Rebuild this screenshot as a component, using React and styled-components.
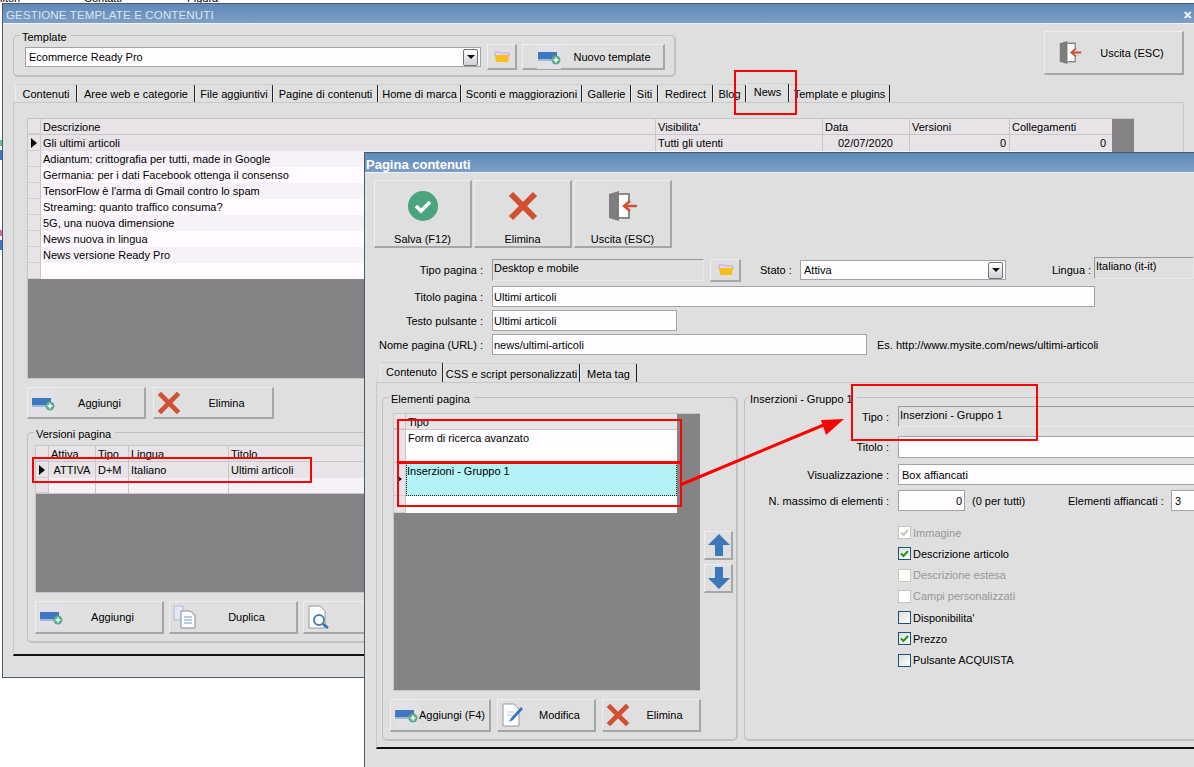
import React from 'react';
import styled, { createGlobalStyle } from 'styled-components';

const GlobalStyle = createGlobalStyle`
  html, body {
    margin: 0;
    padding: 0;
    width: 1194px;
    height: 767px;
    overflow: hidden;
    background: #fff;
    font-family: "Liberation Sans", Arial, sans-serif;
    font-size: 11px;
    color: #000;
  }
  * { box-sizing: border-box; }
`;

const Desktop = styled.div`
  position: relative;
  width: 1194px;
  height: 767px;
  overflow: hidden;
  background: #fff;
`;

const DesktopLabels = styled.div`
  display: flex;
  margin-top: -8px;
  height: 12px;
  line-height: 12px;
  span:nth-child(1) { width: 84px; }
  span:nth-child(2) { width: 103px; }
`;

const Speck = styled.div`
  position: absolute;
  left: 0;
  top: ${(p) => p.$top}px;
  width: 2px;
  height: ${(p) => p.$h}px;
  background: ${(p) => p.$c};
`;

const Window = styled.div`
  position: absolute;
  left: ${(p) => p.$left}px;
  top: ${(p) => p.$top}px;
  width: ${(p) => p.$width}px;
  height: ${(p) => p.$height}px;
  background: #dfdfdf;
  border: 1px solid #4d5a6c;
  border-right: none;
  overflow: hidden;
`;

const TitleBar = styled.div`
  height: 20px;
  display: flex;
  align-items: center;
  justify-content: space-between;
  padding: 3px 2px 0 ${(p) => p.$left}px;
  background: linear-gradient(#5f8ab8, #7c9fc6);
  border-bottom: 1px solid #eef2f6;
  color: ${(p) => p.$color};
  font-size: ${(p) => p.$size}px;
  font-weight: ${(p) => p.$weight};
  letter-spacing: ${(p) => p.$spacing}px;
  white-space: nowrap;
`;

const CloseMark = styled.span`
  color: #fff;
  font-size: 11px;
  font-weight: bold;
`;

const TopRow = styled.div`
  display: flex;
  align-items: flex-start;
  padding: 7px 9px 0 10px;
`;

const Group = styled.fieldset`
  margin: ${(p) => p.$margin || 0};
  padding: ${(p) => p.$padding || 0};
  width: ${(p) => p.$width}px;
  height: ${(p) => p.$height}px;
  border: 2px solid #c0c0c0;
  border-width: 1px 2px 2px 1px;
  border-radius: 5px;
  min-inline-size: 0;
  flex: none;
  position: relative;
`;

const GroupTitle = styled.div`
  position: absolute;
  left: ${(p) => p.$left ?? 6}px;
  top: -5px;
  padding: 0 4px 0 2px;
  height: 13px;
  line-height: 13px;
  background: #dfdfdf;
  font-size: 11px;
  white-space: nowrap;
`;

const TemplateRow = styled.div`
  display: flex;
  align-items: center;
`;

const Field = styled.div`
  display: flex;
  align-items: center;
  justify-content: ${(p) => (p.$right ? 'flex-end' : 'flex-start')};
  flex: none;
  width: ${(p) => p.$width}px;
  height: ${(p) => p.$height || 21}px;
  padding: 0 2px 0 ${(p) => (p.$tight ? 1 : 3)}px;
  background: #fffdff;
  border: 1px solid #a3a3a3;
  font-size: 11px;
  white-space: nowrap;
`;

const ReadOnlyField = styled.div`
  flex: none;
  width: ${(p) => p.$width}px;
  height: ${(p) => p.$height || 22}px;
  margin-top: ${(p) => (p.$lift ? -4 : 0)}px;
  padding: 0 0 0 1px;
  line-height: 16px;
  background: #dfdfdf;
  border: 1px solid #e9e9e9;
  border-top: 1px solid #999;
  border-left: 1px solid #999;
  font-size: 11px;
  white-space: nowrap;
`;

const ComboButton = styled.span`
  margin-left: auto;
  width: 15px;
  height: 17px;
  display: flex;
  align-items: center;
  justify-content: center;
  background: linear-gradient(#fff, #cfd0d4);
  border: 1px solid #6f7378;
  border-radius: 2px;
  &::after {
    content: '';
    border-left: 4px solid transparent;
    border-right: 4px solid transparent;
    border-top: 4px solid #111;
  }
`;

const Button = styled.div`
  flex: none;
  display: flex;
  flex-direction: ${(p) => (p.$stack ? 'column' : 'row')};
  align-items: center;
  width: ${(p) => p.$width}px;
  height: ${(p) => p.$height}px;
  padding: ${(p) => p.$padding || '0'};
  margin: ${(p) => p.$margin || '0'};
  background: #dfdfdf;
  border: 1px solid #eeeeee;
  border-right: 2px solid #a6a6a6;
  border-bottom: 2px solid #a6a6a6;
  font-size: 11px;
  white-space: nowrap;
`;

const ButtonLabel = styled.span`
  flex: 1;
  text-align: center;
`;

const StackLabel = styled.span`
  margin-top: auto;
  text-align: center;
`;

const Tabs = styled.div`
  display: flex;
  align-items: flex-end;
  height: ${(p) => p.$height}px;
  margin: ${(p) => p.$margin};
`;

const Tab = styled.div`
  flex: none;
  width: ${(p) => p.$width}px;
  height: ${(p) => (p.$active ? p.$tall : p.$tall - 1)}px;
  display: flex;
  align-items: center;
  justify-content: center;
  border-top: 1px solid #cfcfcf;
  border-left: 1px solid #ececec;
  border-right: 1px solid #222;
  border-top-left-radius: 2px;
  border-top-right-radius: 2px;
  font-size: 11px;
  white-space: nowrap;
  padding-top: ${(p) => (p.$active ? 0 : 1)}px;
  padding-bottom: ${(p) => (p.$active ? 2 : 0)}px;
`;

const TabPanel = styled.div`
  margin: ${(p) => p.$margin};
  width: ${(p) => p.$width}px;
  height: ${(p) => p.$height}px;
  padding: ${(p) => p.$padding};
  border-top: 1px solid #c8c8c8;
  border-left: 1px solid #c8c8c8;
  border-right: 1px solid #c8c8c8;
  border-bottom: 2px solid #111;
  display: ${(p) => (p.$row ? 'flex' : 'block')};
  gap: ${(p) => (p.$row ? 6 : 0)}px;
  align-items: flex-start;
`;

const GridArea = styled.div`
  flex: none;
  width: ${(p) => p.$width}px;
  height: ${(p) => p.$height}px;
  margin: ${(p) => p.$margin || 0};
  background: #858386;
  border: 1px solid #c6c6c6;
  border-right: none;
  overflow: hidden;
`;

const GridTable = styled.div`
  width: ${(p) => p.$width}px;
`;

const GridRow = styled.div`
  display: grid;
  grid-template-columns: ${(p) => p.$cols};
  height: ${(p) => p.$height || 16}px;
  background: ${(p) => p.$bg};
  border-bottom: ${(p) => (p.$line ? '1px solid #c8c6c8' : 'none')};
`;

const Cell = styled.div`
  padding: ${(p) =>
    p.$right ? `0 ${p.$rightPad || 3}px 0 0` : p.$center ? '0' : '0 0 0 2px'};
  text-align: ${(p) => (p.$right ? 'right' : p.$center ? 'center' : 'left')};
  line-height: 16px;
  font-size: 11px;
  white-space: nowrap;
  overflow: hidden;
  border-right: ${(p) => (p.$line ? '1px solid #c8c6c8' : 'none')};
`;

const RowHead = styled.div`
  background: #e7e3e7;
  border-right: 1px solid #c8c6c8;
  border-bottom: 1px solid #d0ced0;
  display: flex;
  align-items: center;
  justify-content: center;
  &::after {
    content: '';
    display: ${(p) => (p.$current ? 'block' : 'none')};
    border-top: ${(p) => p.$mark}px solid transparent;
    border-bottom: ${(p) => p.$mark}px solid transparent;
    border-left: ${(p) => p.$mark + 1}px solid #000;
  }
`;

const SelectedCell = styled.div`
  height: 33px;
  padding: 0;
  line-height: 15px;
  font-size: 11px;
  background: #b3f3f5;
  border: 1px dotted #222;
`;

const ButtonRow = styled.div`
  display: flex;
  gap: ${(p) => p.$gap}px;
  margin: ${(p) => p.$margin};
`;

const Toolbar = styled.div`
  display: flex;
  gap: 2px;
  padding: 7px 0 0 9px;
`;

const FormRow = styled.div`
  display: flex;
  align-items: center;
  margin-top: ${(p) => p.$top}px;
  height: ${(p) => p.$height || 21}px;
`;

const FormLabel = styled.div`
  flex: none;
  width: ${(p) => p.$width}px;
  margin-right: 9px;
  text-align: right;
  font-size: 11px;
  white-space: nowrap;
`;

const InlineLabel = styled.div`
  flex: none;
  width: ${(p) => (p.$width ? `${p.$width}px` : 'auto')};
  margin: ${(p) => p.$margin};
  font-size: 11px;
  white-space: nowrap;
`;

const ElementsBody = styled.div`
  display: flex;
  align-items: flex-start;
  gap: 4px;
`;

const ArrowColumn = styled.div`
  display: flex;
  flex-direction: column;
  gap: 4px;
  margin-top: 118px;
`;

const CheckList = styled.div`
  display: flex;
  flex-direction: column;
  gap: 8.3px;
  margin: 15px 0 0 153px;
`;

const CheckRow = styled.div`
  display: flex;
  align-items: center;
  gap: 2px;
  height: 13px;
  font-size: 11px;
  color: ${(p) => (p.$disabled ? '#979797' : '#000')};
`;

const CheckBox = styled.span`
  width: 13px;
  height: 13px;
  flex: none;
  display: flex;
  align-items: center;
  justify-content: center;
  border: 1px solid ${(p) => (p.$disabled ? '#c9c7bb' : '#1c5180')};
  background: ${(p) =>
    p.$disabled ? '#fff' : 'linear-gradient(135deg, #dcdcd7, #fff)'};
`;

const RedBox = styled.div`
  position: absolute;
  left: ${(p) => p.$x}px;
  top: ${(p) => p.$y}px;
  width: ${(p) => p.$w}px;
  height: ${(p) => p.$h}px;
  border: 2px solid #f00;
  pointer-events: none;
`;

const ArrowOverlay = styled.svg`
  position: absolute;
  left: 676px;
  top: 414px;
`;

const IconSlot = styled.svg`
  flex: none;
  display: block;
  margin: ${(p) => p.$margin || 0};
`;

const PlusIcon = () => (
  <IconSlot width="24" height="24" viewBox="0 0 24 24">
    <rect width="24" height="24" fill="#e4e0e7" />
    <rect x="1" y="7" width="19" height="8" fill="#3f78c0" />
    <rect x="1" y="14" width="19" height="2" fill="#9db9d8" />
    <circle cx="19" cy="15" r="4.5" fill="#58ad8c" />
    <path d="M19 12.5v5M16.5 15h5" stroke="#fff" strokeWidth="1.6" />
  </IconSlot>
);

const CrossIcon = ({ size = 24, margin }) => (
  <IconSlot width={size} height={size} viewBox="0 0 30 30" $margin={margin}>
    <path d="M3 3 L27 27 M27 3 L3 27" stroke="#d24f32" strokeWidth="6" />
  </IconSlot>
);

const FolderIcon = () => (
  <IconSlot width="16" height="12" viewBox="0 0 16 12">
    <path d="M1 1h5l1 1h8v3H1z" fill="#e8d8f0" stroke="#b49ae0" strokeWidth="0.8" />
    <path d="M1 4h14l-1 7H2z" fill="#fbbd1d" />
  </IconSlot>
);

const DoorIcon = ({ size = 30, margin }) => (
  <IconSlot width={size} height={size} viewBox="0 0 30 30" $margin={margin}>
    <path d="M11 3h10v7M21 20v7H11" fill="none" stroke="#8a8a8a" strokeWidth="2" />
    <rect x="11" y="4" width="9" height="22" fill="#fff" />
    <path d="M1 3l10-3v30l-10-3z" fill="#7d7d7d" />
    <path d="M29 15H17M22 10l-6 5 6 5" fill="none" stroke="#d24f32" strokeWidth="2.4" />
  </IconSlot>
);

const SaveIcon = () => (
  <IconSlot width="30" height="30" viewBox="0 0 30 30" $margin="10px 0 0">
    <circle cx="15" cy="15" r="15" fill="#4aa57e" />
    <path d="M8 15l5 5 9-9" fill="none" stroke="#fff" strokeWidth="3.5" />
  </IconSlot>
);

const PageIcon = ({ children }) => (
  <IconSlot width="24" height="24" viewBox="0 0 24 24">
    <path d="M2 1h11l5 5v17H2z" fill="#fff" stroke="#9a9a9a" />
    {children}
  </IconSlot>
);

const DuplicateIcon = () => (
  <IconSlot width="24" height="24" viewBox="0 0 24 24">
    <path d="M1 1h9v14H1z" fill="#dfe9f6" stroke="#b0bccc" />
    <path d="M8 6h9l5 4v13H8z" fill="#fff" stroke="#7f8a98" />
    <path d="M11 12h8M11 15h8M11 18h8" stroke="#6d9bd0" strokeWidth="1.2" />
  </IconSlot>
);

const UpDownIcon = ({ down }) => (
  <IconSlot width="24" height="24" viewBox="0 0 24 24">
    <path
      d={down ? 'M8 1h8v11h7L12 23 1 12h7z' : 'M8 23h8V12h7L12 1 1 12h7z'}
      fill="#3a78b8"
    />
  </IconSlot>
);

const GreenCheck = ({ color = '#1f9a1f' }) => (
  <svg width="9" height="9" viewBox="0 0 9 9">
    <path d="M1 4.5l2.5 2.5L8 2" fill="none" stroke={color} strokeWidth="2" />
  </svg>
);

const newsCols = '13px 615px 167px 87px 100px 99px';
const versionCols = '13px 47px 33px 100px 500px';
const elementCols = '12px 271px';

const newsRows = [
  'Adiantum: crittografia per tutti, made in Google',
  'Germania: per i dati Facebook ottenga il consenso',
  "TensorFlow è l'arma di Gmail contro lo spam",
  'Streaming: quanto traffico consuma?',
  '5G, una nuova dimensione',
  'News nuova in lingua',
  'News versione Ready Pro',
  '',
];

const backTabs = [
  ['Contenuti', 62],
  ['Aree web e categorie', 118],
  ['File aggiuntivi', 78],
  ['Pagine di contenuti', 105],
  ['Home di marca', 83],
  ['Sconti e maggiorazioni', 121],
  ['Gallerie', 49],
  ['Siti', 27],
  ['Redirect', 55],
  ['Blog', 33],
  ['News', 43],
  ['Template e plugins', 101],
];

const checks = [
  { label: 'Immagine', disabled: true, checked: true },
  { label: 'Descrizione articolo', checked: true },
  { label: 'Descrizione estesa', disabled: true },
  { label: 'Campi personalizzati', disabled: true },
  { label: "Disponibilita'" },
  { label: 'Prezzo', checked: true },
  { label: 'Pulsante ACQUISTA' },
];

const BackWindow = () => (
  <Window $left={2} $top={3} $width={1192} $height={675}>
    <TitleBar $color="#dbe5f0" $size={11.5} $weight={400} $spacing={0.15} $left={3}>
      <span>GESTIONE TEMPLATE E CONTENUTI</span>
      <CloseMark>✕</CloseMark>
    </TitleBar>
    <TopRow>
      <Group $width={663} $height={42} $margin="4px 368px 0 0" $padding="8px 0 0 11px">
        <GroupTitle>Template</GroupTitle>
        <TemplateRow>
          <Field $width={456} $height={20}>
            Ecommerce Ready Pro
            <ComboButton />
          </Field>
          <Button $width={30} $height={26} $margin="0 5px 0 6px" $padding="0 0 0 6px">
            <FolderIcon />
          </Button>
          <Button $width={143} $height={26} $padding="0 0 0 14px">
            <PlusIcon />
            <ButtonLabel>Nuovo template</ButtonLabel>
          </Button>
        </TemplateRow>
      </Group>
      <Button $width={140} $height={44} $padding="0 0 0 14px">
        <DoorIcon size={23} />
        <ButtonLabel>Uscita (ESC)</ButtonLabel>
      </Button>
    </TopRow>
    <Tabs $height={19} $margin="6px 0 0 12px">
      {backTabs.map(([name, width]) => (
        <Tab key={name} $width={width} $tall={19} $active={name === 'News'}>
          {name}
        </Tab>
      ))}
    </Tabs>
    <TabPanel $margin="0 0 0 10px" $width={1171} $height={554} $padding="15px 0 0 13px">
      <GridArea $width={1107} $height={261}>
        <GridTable $width={1084}>
          <GridRow $cols={newsCols} $bg="#e7e3e7" $line>
            <RowHead />
            <Cell $line>Descrizione</Cell>
            <Cell $line>Visibilita'</Cell>
            <Cell $line>Data</Cell>
            <Cell $line>Versioni</Cell>
            <Cell>Collegamenti</Cell>
          </GridRow>
          <GridRow $cols={newsCols} $bg="#e7e3e7">
            <RowHead $current $mark={5} />
            <Cell $line>Gli ultimi articoli</Cell>
            <Cell $line>Tutti gli utenti</Cell>
            <Cell $right $rightPad={16} $line>02/07/2020</Cell>
            <Cell $right $line>0</Cell>
            <Cell $right>0</Cell>
          </GridRow>
          {newsRows.map((title, i) => (
            <GridRow key={i} $cols={newsCols} $bg={i % 2 ? '#fffbff' : '#f7f2f7'}>
              <RowHead />
              <Cell>{title}</Cell>
            </GridRow>
          ))}
        </GridTable>
      </GridArea>
      <ButtonRow $gap={7} $margin="8px 0 0 0">
        <Button $width={119} $height={32} $padding="0 0 0 3px">
          <PlusIcon />
          <ButtonLabel>Aggiungi</ButtonLabel>
        </Button>
        <Button $width={121} $height={32} $padding="0 0 0 3px">
          <CrossIcon />
          <ButtonLabel>Elimina</ButtonLabel>
        </Button>
      </ButtonRow>
      <Group $width={1130} $height={211} $margin="13px 0 0 0" $padding="12px 0 0 7px">
        <GroupTitle>Versioni pagina</GroupTitle>
        <GridArea $width={1000} $height={148}>
          <GridTable $width={700}>
            <GridRow $cols={versionCols} $bg="#e7e3e7" $line>
              <RowHead />
              <Cell $line>Attiva</Cell>
              <Cell $line>Tipo</Cell>
              <Cell $line>Lingua</Cell>
              <Cell>Titolo</Cell>
            </GridRow>
            <GridRow $cols={versionCols} $bg="#e7e3e7">
              <RowHead $current $mark={5} />
              <Cell $center $line>ATTIVA</Cell>
              <Cell $line>D+M</Cell>
              <Cell $line>Italiano</Cell>
              <Cell>Ultimi articoli</Cell>
            </GridRow>
            <GridRow $cols={versionCols} $bg="#f7f2f7" $line>
              <RowHead />
              <Cell $line />
              <Cell $line />
              <Cell $line />
              <Cell />
            </GridRow>
          </GridTable>
        </GridArea>
        <ButtonRow $gap={5} $margin="8px 0 0 0">
          <Button $width={129} $height={33} $padding="0 0 0 3px">
            <PlusIcon />
            <ButtonLabel>Aggiungi</ButtonLabel>
          </Button>
          <Button $width={129} $height={33} $padding="0 0 0 3px">
            <DuplicateIcon />
            <ButtonLabel>Duplica</ButtonLabel>
          </Button>
          <Button $width={129} $height={33} $padding="0 0 0 3px">
            <PageIcon>
              <circle cx="12" cy="15" r="5" fill="#fff" stroke="#4a7fb5" strokeWidth="2" />
              <path d="M16 19l5 4" stroke="#2f6db0" strokeWidth="2.5" />
            </PageIcon>
          </Button>
        </ButtonRow>
      </Group>
    </TabPanel>
  </Window>
);

const FrontWindow = () => (
  <Window $left={364} $top={152} $width={830} $height={625}>
    <TitleBar $color="#fff" $size={13} $weight={700} $spacing={0} $left={1}>
      <span>Pagina contenuti</span>
    </TitleBar>
    <Toolbar>
      <Button $width={98} $height={68} $stack $padding="0 0 1px">
        <SaveIcon />
        <StackLabel>Salva (F12)</StackLabel>
      </Button>
      <Button $width={98} $height={68} $stack $padding="0 0 1px">
        <CrossIcon size={30} margin="10px 0 0" />
        <StackLabel>Elimina</StackLabel>
      </Button>
      <Button $width={98} $height={68} $stack $padding="0 0 1px">
        <DoorIcon margin="10px 0 0" />
        <StackLabel>Uscita (ESC)</StackLabel>
      </Button>
    </Toolbar>
    <FormRow $top={11} $height={22}>
      <FormLabel $width={118}>Tipo pagina :</FormLabel>
      <ReadOnlyField $width={212}>Desktop e mobile</ReadOnlyField>
      <Button $width={31} $height={23} $margin="0 0 0 6px" $padding="0 0 0 7px">
        <FolderIcon />
      </Button>
      <InlineLabel $width={33} $margin="0 7px 0 19px">Stato :</InlineLabel>
      <Field $width={206} $height={20}>
        Attiva
        <ComboButton />
      </Field>
      <InlineLabel $width={36} $margin="0 6px 0 46px">Lingua :</InlineLabel>
      <ReadOnlyField $width={100} $lift>Italiano (it-it)</ReadOnlyField>
    </FormRow>
    <FormRow $top={5}>
      <FormLabel $width={118}>Titolo pagina :</FormLabel>
      <Field $width={603} $tight>Ultimi articoli</Field>
    </FormRow>
    <FormRow $top={3}>
      <FormLabel $width={118}>Testo pulsante :</FormLabel>
      <Field $width={185} $tight>Ultimi articoli</Field>
    </FormRow>
    <FormRow $top={3}>
      <FormLabel $width={118}>Nome pagina (URL) :</FormLabel>
      <Field $width={375} $tight>news/ultimi-articoli</Field>
      <InlineLabel $margin="0 0 0 10px">Es. http://www.mysite.com/news/ultimi-articoli</InlineLabel>
    </FormRow>
    <Tabs $height={20} $margin="7px 0 0 15px">
      <Tab $width={63} $tall={20} $active>Contenuto</Tab>
      <Tab $width={137} $tall={20}>CSS e script personalizzati</Tab>
      <Tab $width={57} $tall={20}>Meta tag</Tab>
    </Tabs>
    <TabPanel $margin="0 0 0 11px" $width={840} $height={367} $padding="14px 0 0 5px" $row>
      <Group $width={356} $height={344} $padding="15px 0 0 10px">
        <GroupTitle>Elementi pagina</GroupTitle>
        <ElementsBody>
          <GridArea $width={307} $height={278}>
            <GridTable $width={283}>
              <GridRow $cols={elementCols} $bg="#e7e3e7" $line>
                <RowHead />
                <Cell>Tipo</Cell>
              </GridRow>
              <GridRow $cols={elementCols} $bg="#fffdff" $height={33}>
                <RowHead />
                <Cell>Form di ricerca avanzato</Cell>
              </GridRow>
              <GridRow $cols={elementCols} $bg="#fffdff" $height={33}>
                <RowHead $current $mark={3} />
                <SelectedCell>Inserzioni - Gruppo 1</SelectedCell>
              </GridRow>
              <GridRow $cols={elementCols} $bg="#fffdff" $height={17}>
                <RowHead />
                <Cell />
              </GridRow>
            </GridTable>
          </GridArea>
          <ArrowColumn>
            <Button $width={29} $height={29} $padding="0 0 0 2px">
              <UpDownIcon />
            </Button>
            <Button $width={29} $height={29} $padding="0 0 0 2px">
              <UpDownIcon down />
            </Button>
          </ArrowColumn>
        </ElementsBody>
        <ButtonRow $gap={6} $margin="8px 0 0 -3px">
          <Button $width={101} $height={33} $padding="0 3px 0 3px">
            <PlusIcon />
            <ButtonLabel>Aggiungi (F4)</ButtonLabel>
          </Button>
          <Button $width={99} $height={33} $padding="0 0 0 3px">
            <PageIcon>
              <path d="M8 19l2-4 10-11 2 2-10 11z" fill="#2f74c0" />
              <path d="M6 9h7M6 12h5" stroke="#c4c4c4" />
            </PageIcon>
            <ButtonLabel>Modifica</ButtonLabel>
          </Button>
          <Button $width={99} $height={33} $padding="0 0 0 3px">
            <CrossIcon />
            <ButtonLabel>Elimina</ButtonLabel>
          </Button>
        </ButtonRow>
      </Group>
      <Group $width={500} $height={344} $padding="8px 0 0 0">
        <GroupTitle $left={3}>Inserzioni - Gruppo 1</GroupTitle>
        <FormRow $top={0} $height={21}>
          <FormLabel $width={144}>Tipo :</FormLabel>
          <ReadOnlyField $width={320} $height={21}>Inserzioni - Gruppo 1</ReadOnlyField>
        </FormRow>
        <FormRow $top={9} $height={22}>
          <FormLabel $width={144}>Titolo :</FormLabel>
          <Field $width={320} $height={22} />
        </FormRow>
        <FormRow $top={6}>
          <FormLabel $width={144}>Visualizzazione :</FormLabel>
          <Field $width={320}>Box affiancati</Field>
        </FormRow>
        <FormRow $top={5}>
          <FormLabel $width={144}>N. massimo di elementi :</FormLabel>
          <Field $width={67} $right>0</Field>
          <InlineLabel $width={96} $margin="0 0 0 7px">(0 per tutti)</InlineLabel>
          <InlineLabel $width={97} $margin="0 6px 0 0">Elementi affiancati :</InlineLabel>
          <Field $width={40}>3</Field>
        </FormRow>
        <CheckList>
          {checks.map((item) => (
            <CheckRow key={item.label} $disabled={item.disabled}>
              <CheckBox $disabled={item.disabled}>
                {item.checked && (
                  <GreenCheck color={item.disabled ? '#c9c7bb' : '#1f9a1f'} />
                )}
              </CheckBox>
              {item.label}
            </CheckRow>
          ))}
        </CheckList>
      </Group>
    </TabPanel>
  </Window>
);

export default function App() {
  return (
    <Desktop>
      <GlobalStyle />
      <DesktopLabels>
        <span>ilton</span>
        <span>Contatti</span>
        <span>Figura</span>
      </DesktopLabels>
      <Speck $top={140} $h={6} $c="#5ec48a" />
      <Speck $top={150} $h={10} $c="#3f78c0" />
      <Speck $top={230} $h={6} $c="#d66ca0" />
      <Speck $top={240} $h={10} $c="#3f78c0" />
      <BackWindow />
      <FrontWindow />
      <RedBox $x={734} $y={70} $w={63} $h={45} />
      <RedBox $x={32} $y={457} $w={280} $h={26} />
      <RedBox $x={397} $y={419} $w={285} $h={45} />
      <RedBox $x={397} $y={461} $w={285} $h={46} />
      <RedBox $x={851} $y={384} $w={187} $h={57} />
      <ArrowOverlay width="172" height="76" viewBox="0 0 172 76">
        <path d="M4 71 L150 10" stroke="#f00" strokeWidth="3" />
        <path d="M145 6 L150 21 L168 5 Z" fill="#f00" />
      </ArrowOverlay>
    </Desktop>
  );
}
